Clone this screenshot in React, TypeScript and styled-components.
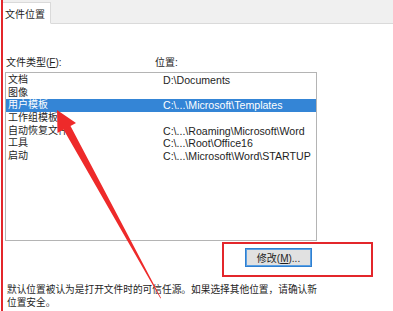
import React from 'react';
import styled, { createGlobalStyle } from 'styled-components';

const GlobalStyle = createGlobalStyle`
  html, body {
    margin: 0;
    padding: 0;
    background: #ffffff;
  }
  body {
    font-family: "Liberation Sans", "Noto Sans CJK SC", sans-serif;
    font-size: 10.5px;
    color: #1e1e1e;
  }
`;

const Page = styled.div`
  position: relative;
  width: 390px;
  height: 311px;
  margin-left: 1px;
  border-left: 2px solid #e3262b;
  overflow: hidden;
  background: #ffffff;
`;

const TabStrip = styled.div`
  display: flex;
  align-items: flex-end;
  height: 23px;
  background: #f0f0f0;
  border-bottom: 1px solid #dadada;
`;

const Tab = styled.div`
  display: flex;
  align-items: center;
  height: 20px;
  margin-bottom: -1px;
  padding: 0 5px 0 2px;
  background: #ffffff;
  border: 1px solid #dadada;
  border-left: none;
  border-bottom: 1px solid #ffffff;
  font-size: 10px;
`;

const Body = styled.div`
  display: flex;
  flex-direction: column;
  padding: 32px 0 0 3px;
`;

const HeaderRow = styled.div`
  display: grid;
  grid-template-columns: 149px 1fr;
  height: 13px;
  line-height: 13px;
  font-size: 10px;
`;

const Key = styled.u`
  text-decoration-thickness: 1px;
  text-underline-offset: 1px;
`;

const ListBox = styled.div`
  display: flex;
  flex-direction: column;
  width: 310px;
  height: 166px;
  margin: 3px 0 0 -1px;
  padding-top: 1px;
  border: 1px solid #b4b4b4;
  box-sizing: content-box;
`;

const Row = styled.div<{ $selected?: boolean }>`
  display: grid;
  grid-template-columns: 155px 1fr;
  height: 12.7px;
  line-height: 12.7px;
  padding-left: 2px;
  white-space: nowrap;
  background: ${({ $selected }) => ($selected ? '#3485d6' : 'transparent')};
  color: ${({ $selected }) => ($selected ? '#ffffff' : '#1e1e1e')};
`;

const TypeCell = styled.span`
  font-size: 10px;
`;

const PathCell = styled.span`
  font-size: 10.6px;
`;

const ButtonArea = styled.div`
  display: flex;
  align-items: flex-start;
  width: 151px;
  height: 35px;
  margin: 1px 0 0 216px;
  padding: 4px 0 0 21px;
  border: 2px solid #e3262b;
  box-sizing: border-box;
`;

const ModifyButton = styled.button`
  width: 67px;
  height: 19px;
  padding: 0;
  background: #e1e1e1;
  border: 1px solid #2f7fd0;
  box-shadow: inset 0 0 0 1px #5aa0e4;
  font-family: "Liberation Sans", "Noto Sans CJK SC", sans-serif;
  font-size: 10px;
  color: #1e1e1e;
`;

const Note = styled.p`
  margin: 6px 0 0 1px;
  width: 320px;
  line-height: 13px;
  font-size: 9.7px;
  white-space: nowrap;
`;

const ArrowLayer = styled.svg`
  position: absolute;
  left: -3px;
  top: 0;
  pointer-events: none;
`;

const rows = [
  { type: '文档', path: 'D:\\Documents' },
  { type: '图像', path: '' },
  { type: '用户模板', path: 'C:\\...\\Microsoft\\Templates', selected: true },
  { type: '工作组模板', path: '' },
  { type: '自动恢复文件', path: 'C:\\...\\Roaming\\Microsoft\\Word' },
  { type: '工具', path: 'C:\\...\\Root\\Office16' },
  { type: '启动', path: 'C:\\...\\Microsoft\\Word\\STARTUP' },
];

export default function App() {
  return (
    <>
      <GlobalStyle />
      <Page>
        <TabStrip>
          <Tab>文件位置</Tab>
        </TabStrip>
        <Body>
          <HeaderRow>
            <span>
              文件类型(<Key>F</Key>):
            </span>
            <span>位置:</span>
          </HeaderRow>
          <ListBox>
            {rows.map((r) => (
              <Row key={r.type} $selected={r.selected}>
                <TypeCell>{r.type}</TypeCell>
                <PathCell>{r.path}</PathCell>
              </Row>
            ))}
          </ListBox>
          <ButtonArea>
            <ModifyButton>
              修改(<Key>M</Key>)...
            </ModifyButton>
          </ButtonArea>
          <Note>
            默认位置被认为是打开文件时的可信任源。如果选择其他位置，请确认新
            <br />
            位置安全。
          </Note>
        </Body>
        <ArrowLayer width="393" height="311" viewBox="0 0 393 311">
          <polygon
            points="57,110 76,123 70.5,126 161,298 160.5,298.5 63.5,129.5 57.5,133"
            fill="#ee2a2a"
          />
        </ArrowLayer>
      </Page>
    </>
  );
}
